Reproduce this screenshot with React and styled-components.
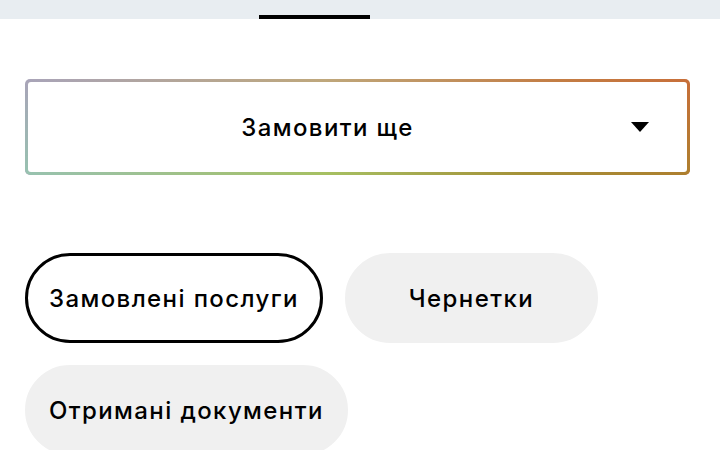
import React, { useState } from 'react';
import styled, { createGlobalStyle } from 'styled-components';

const GlobalStyle = createGlobalStyle`
  body {
    margin: 0;
    background: #fff;
    font-family: Inter, "Noto Sans", sans-serif;
    color: #000;
  }
`;

const TopBar = styled.div`
  height: 19px;
  background: #e8edf1;
  display: flex;
  align-items: flex-end;
  padding-left: 259px;
`;

const Indicator = styled.div`
  width: 111px;
  height: 4px;
  background: #000;
`;

const Content = styled.div`
  padding: 60px 30px 0 25px;
`;

const SelectFrame = styled.div`
  position: relative;
  padding: 3px;
  border-radius: 5px;
  background: linear-gradient(90deg, #a9a4b9 0%, #bfa77c 45%, #c47d45 80%, #c86f3a 100%);

  &::before {
    content: "";
    position: absolute;
    inset: 0;
    border-radius: 5px;
    background: linear-gradient(90deg, #97c2b0 0%, #a6c062 45%, #a49138 75%, #ad7f2e 100%);
    -webkit-mask-image: linear-gradient(to bottom, transparent 0%, #000 100%);
    mask-image: linear-gradient(to bottom, transparent 0%, #000 100%);
  }
`;

const SelectInner = styled.button`
  position: relative;
  z-index: 1;
  width: 100%;
  height: 90px;
  display: flex;
  align-items: center;
  border: 0;
  border-radius: 3px;
  background: #fff;
  padding: 0;
  font: inherit;
  color: inherit;
  cursor: pointer;
`;

const SelectLabel = styled.span`
  flex: 1;
  text-align: center;
  font-size: 24px;
  font-weight: 500;
  letter-spacing: 1.4px;
`;

const ArrowBox = styled.span`
  width: 56px;
  display: flex;
  padding-left: 4px;
`;

const Pills = styled.div`
  margin-top: 78px;
  display: flex;
  flex-wrap: wrap;
  gap: 22px;
`;

const Pill = styled.button`
  height: 90px;
  min-width: 253px;
  padding: 0 21px;
  border-radius: 45px;
  font: inherit;
  font-size: 24px;
  font-weight: 500;
  letter-spacing: 1.4px;
  color: #000;
  cursor: pointer;
  border: 3px solid ${p => (p.$active ? '#000' : '#f0f0f0')};
  background: ${p => (p.$active ? '#fff' : '#f0f0f0')};
`;

const tabs = ['Замовлені послуги', 'Чернетки', 'Отримані документи'];

export default function App() {
  const [active, setActive] = useState(0);

  return (
    <>
      <GlobalStyle />
      <TopBar>
        <Indicator />
      </TopBar>
      <Content>
        <SelectFrame>
          <SelectInner>
            <SelectLabel>Замовити ще</SelectLabel>
            <ArrowBox>
              <svg width="18" height="10" viewBox="0 0 18 10">
                <path d="M0 0h18L9 10z" fill="#000" />
              </svg>
            </ArrowBox>
          </SelectInner>
        </SelectFrame>
        <Pills>
          {tabs.map((t, i) => (
            <Pill key={t} $active={i === active} onClick={() => setActive(i)}>
              {t}
            </Pill>
          ))}
        </Pills>
      </Content>
    </>
  );
}
